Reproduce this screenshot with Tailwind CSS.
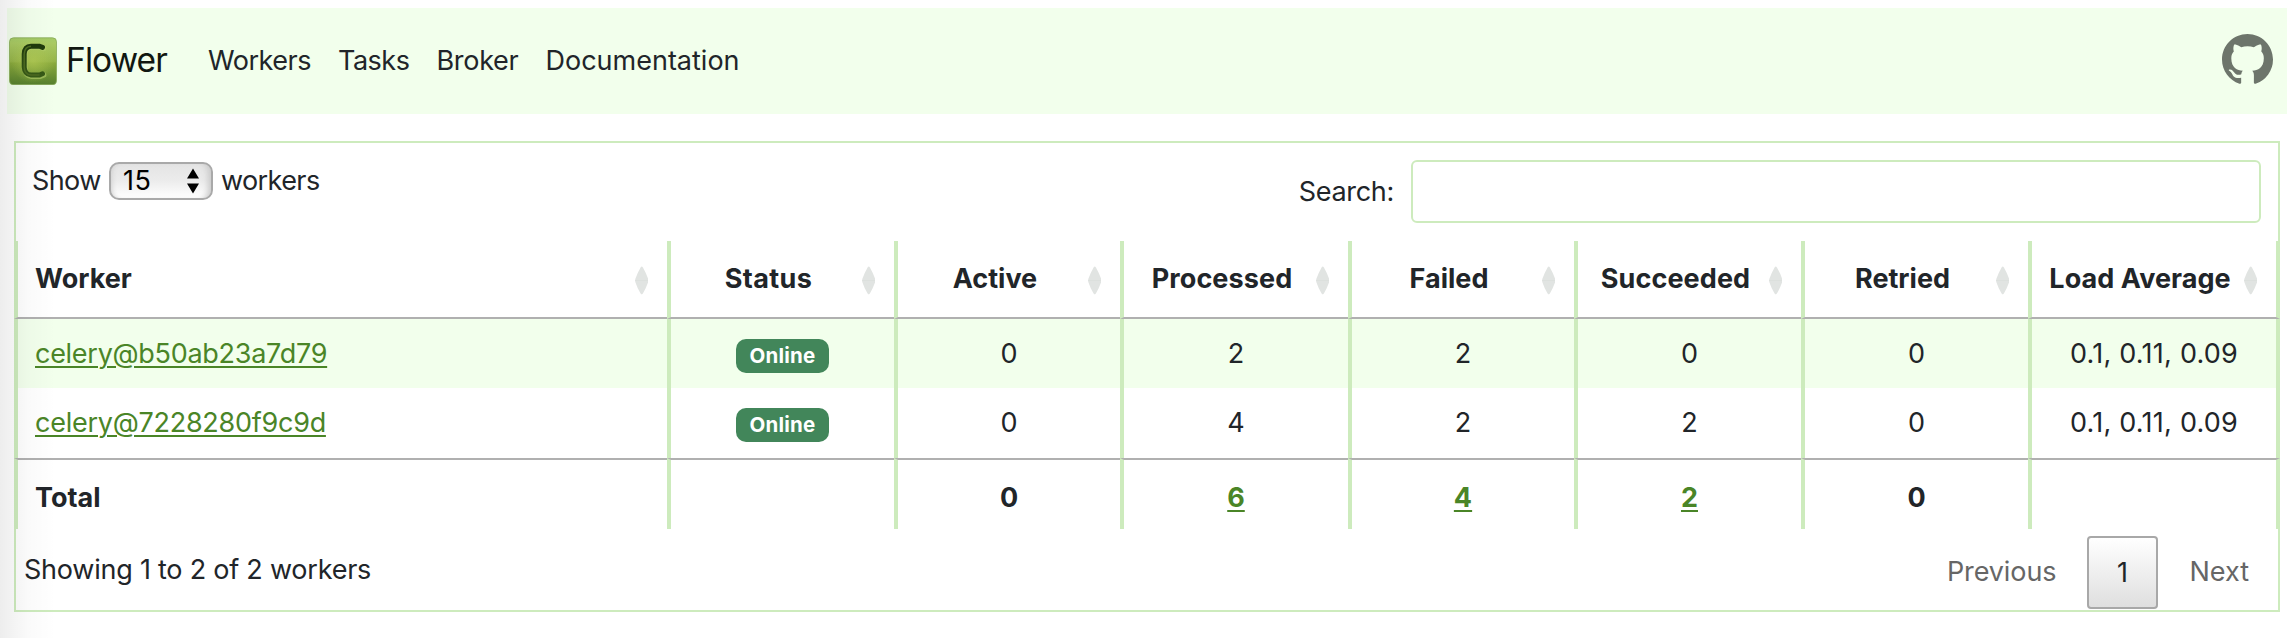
<!DOCTYPE html>
<html lang="en">
<head>
<meta charset="utf-8">
<title>Flower</title>
<script src="https://cdn.jsdelivr.net/npm/@tailwindcss/browser@4"></script>
</head>
<body class="relative h-[638px] overflow-hidden bg-white font-['Inter',sans-serif] text-[27px] leading-[40px] whitespace-nowrap text-[#212529]">

<svg class="hidden">
  <symbol id="sort" viewBox="0 0 14 29">
    <path d="M5.8 .9Q7 -.7 8.2 .9Q11.500 6.500 13.700 13Q14 14.500 13.700 16Q11.500 22.500 8.200 28.100Q7 29.700 5.800 28.100Q2.500 22.500 .3 16Q0 14.500 .3 13Q2.500 6.500 5.800 .9Z" fill="#e1e4e2"/>
    <path d="M0 14.500H14" stroke="#dbdedc" stroke-width=".8"/>
  </symbol>
</svg>

<nav class="mt-2 ml-[7px] flex h-[106px] w-[2280px] items-center bg-[#f2ffec] pr-[14px] pl-[2px]">
  <svg class="h-[48px] w-[48px] shrink-0" viewBox="0 0 48 48">
    <defs>
      <linearGradient id="g" x1="0" y1="0" x2="0" y2="1">
        <stop offset="0" stop-color="#a4cb67"/><stop offset=".12" stop-color="#a9c962"/><stop offset=".5" stop-color="#95b449"/><stop offset=".54" stop-color="#89a93c"/><stop offset="1" stop-color="#567f2e"/>
      </linearGradient>
      <radialGradient id="h" cx=".5" cy=".5" r=".5">
        <stop offset="0" stop-color="#b5cd55" stop-opacity=".7"/><stop offset="1" stop-color="#b5cd55" stop-opacity="0"/>
      </radialGradient>
      <linearGradient id="c" x1="0" y1="0" x2="0" y2="1">
        <stop offset="0" stop-color="#1f3a0c"/><stop offset="1" stop-color="#375a17"/>
      </linearGradient>
    </defs>
    <rect x=".5" y=".8" width="47" height="47" rx="4" fill="url(#g)" stroke="#86a957" stroke-width=".8"/>
    <rect x="2" y="2" width="44" height="44" fill="url(#h)"/>
    <path d="M34 10.500L30.500 9.200H22Q15.500 9.500 15.200 17V30Q15.500 37.500 22 38.300H30.500L34 37" fill="none" stroke="#b4cf6c" stroke-opacity=".6" stroke-width="5.500" stroke-linecap="round" transform="translate(.6 .9)"/>
    <path d="M33.500 10.300L30.500 9.200H22Q15.500 9.500 15.200 17V30Q15.500 37.500 22 38H30.500L33.500 36.800" fill="none" stroke="url(#c)" stroke-width="5" stroke-linecap="round"/>
    <path d="M22 9.200Q15.500 9.500 15.200 17V30Q15.500 37.500 22 38H30.500" fill="none" stroke="#4d6a22" stroke-width="1.500"/>
  </svg>
  <a class="mb-[3px] ml-[9px] w-[142px] text-[33.500px] tracking-[-.9px] text-[#111811]">Flower</a>
  <div class="flex">
    <a class="w-[130px] tracking-[-.5px]">Workers</a>
    <a class="w-[98.500px] tracking-[-.5px]">Tasks</a>
    <a class="w-[109px] tracking-[-.3px]">Broker</a>
    <a>Documentation</a>
  </div>
  <svg class="mb-[3px] ml-auto h-[51px] w-[51px]" viewBox="0 0 16 16" fill="#6d756b"><path d="M8 0C3.580 0 0 3.580 0 8c0 3.540 2.290 6.530 5.470 7.590.4.070.55-.17.55-.38 0-.19-.01-.82-.01-1.490-2.010.37-2.530-.49-2.690-.94-.09-.23-.48-.94-.82-1.130-.28-.15-.68-.52-.01-.53.63-.01 1.080.58 1.230.82.72 1.210 1.870.87 2.330.66.070-.52.28-.87.51-1.070-1.780-.2-3.640-.89-3.640-3.950 0-.87.31-1.590.82-2.150-.08-.2-.36-1.020.08-2.120 0 0 .67-.21 2.200.82.64-.18 1.320-.27 2-.27s1.360.09 2 .27c1.530-1.040 2.200-.82 2.200-.82.44 1.100.16 1.920.08 2.120.51.56.82 1.270.82 2.150 0 3.070-1.870 3.750-3.650 3.950.29.25.54.73.54 1.480 0 1.070-.01 1.930-.01 2.200 0 .21.15.46.55.38A8.010 8.010 0 0 0 16 8c0-4.420-3.580-8-8-8z"/></svg>
</nav>

<main class="mt-[27px] ml-[14px] h-[471px] w-[2266px] border-2 border-[#cdebbd]">
  <div class="flex h-[98px] items-start justify-between pr-[17px] pl-[16px]">
    <label class="mt-[18px] flex items-center tracking-[-.6px]">
      <span class="w-[77px]">Show</span>
      <span class="flex h-[38px] w-[104px] items-center justify-between rounded-[10px] border-2 border-[#a9a9a9] bg-linear-to-b from-[#e4e4e4] via-[#ececec] to-white pr-[11px] pl-[12px] tracking-[.6px] text-black shadow-[inset_-7px_0_6px_-4px_#c9c9c9,inset_5px_0_5px_-4px_#cfcfcf]">15
        <svg class="h-[26px] w-[14px]" viewBox="0 0 14 26"><path d="M7 .500L13 10.500H1ZM7 25.500L1 15.500H13Z"/></svg>
      </span>
      <span class="ml-[8px]">workers</span>
    </label>
    <label class="mt-[17px] flex items-center">
      <span class="mr-[17px] tracking-[-.3px]">Search:</span>
      <span class="h-[63px] w-[850px] rounded-[6px] border-2 border-[#cdebbd]"></span>
    </label>
  </div>

  <div id="table" class="-mx-[2px] grid grid-cols-[653px_227px_226px_228px_226px_227px_227px_252px] grid-rows-[78px_69px_70px_71px] [&>*]:flex [&>*]:items-center [&>*]:justify-center [&>*]:border-l-4 [&>*]:border-[#cdebbd] [&>*:nth-child(8n+1)]:justify-start [&>*:nth-child(8n+1)]:pl-[17px] [&>*:nth-child(8n)]:border-r-4 [&_a]:text-[#4a8527] [&_a]:underline [&_a]:decoration-2 [&_a]:underline-offset-[3px]"></div>

  <div class="flex h-[81px] items-start justify-between pl-[8px]">
    <div class="mt-[21px] tracking-[-.23px]">Showing 1 to 2 of 2 workers</div>
    <div class="flex items-start text-[#666]">
      <span class="mt-[23px] mr-[31px] tracking-[-.1px]">Previous</span>
      <span class="mt-[7px] flex h-[73px] w-[71px] items-center justify-center rounded-[4px] border-2 border-[#a8a8a8] bg-linear-to-b from-white to-[#dfdfdf] pr-[1px] text-[#212529]">1</span>
      <span class="mt-[23px] mr-[29px] ml-[31px]">Next</span>
    </div>
  </div>
</main>

<div class="pointer-events-none absolute inset-y-0 left-0 w-[56px] bg-linear-to-r from-black/7 via-black/2 to-transparent"></div>

<script>
const table = document.getElementById('table');
const add = (cls, html) => {
  const d = document.createElement('div');
  d.className = cls;
  d.innerHTML = html;
  table.append(d);
};
const icon = '<svg class="absolute right-[19px] top-[25px] h-[29px] w-[13.500px]"><use href="#sort"/></svg>';
[['Worker', ''], ['Status', 'tracking-[.4px]'], ['Active', ''], ['Processed', 'tracking-[.1px]'], ['Failed', ''], ['Succeeded', 'tracking-[.1px]'], ['Retried', ''], ['Load Average', 'tracking-[.05px]']].forEach(([t, c], i) =>
  add('relative border-b-2 border-b-[#b0b0b0]! font-bold ' + (i ? 'pr-[28px] ' : '') + c, t + icon));
const badge = '<span class="mt-[5px] flex h-[34px] w-[93px] items-center justify-center rounded-[10px] bg-[#42865a] text-[20.500px] font-bold tracking-[.2px] text-white">Online</span>';
['<a class="tracking-[-.28px]">celery@b50ab23a7d79</a>', badge, 0, 2, 2, 0, 0, '<span class="tracking-[.25px]">0.1, 0.11, 0.09</span>'].forEach(v => add('bg-[#f2ffec]', v));
['<a class="tracking-[-.26px]">celery@7228280f9c9d</a>', badge, 0, 4, 2, 2, 0, '<span class="tracking-[.25px]">0.1, 0.11, 0.09</span>'].forEach(v => add('pb-px', v));
['Total', '', 0, '<a>6</a>', '<a>4</a>', '<a>2</a>', 0, ''].forEach(v => add('border-t-2 border-t-[#b0b0b0]! pt-[6px] font-bold', v));
</script>
</body>
</html>
